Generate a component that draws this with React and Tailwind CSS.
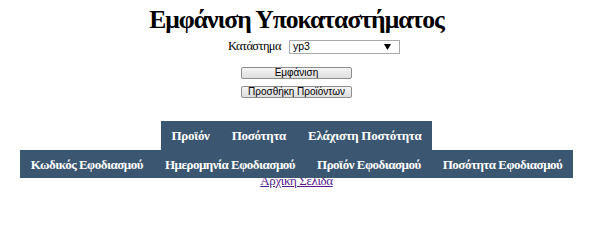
export default function App() {
  const serif = { fontFamily: '"Liberation Serif", "Times New Roman", serif' }
  const top = ['Προϊόν', 'Ποσότητα', 'Ελάχιστη Ποστότητα']
  const bottom = ['Κωδικός Εφοδιασμού', 'Ημερομηνία Εφοδιασμού', 'Προϊόν Εφοδιασμού', 'Ποσότητα Εφοδιασμού']

  return (
    <div className="w-[593px] bg-white text-black font-['Liberation_Serif',serif]">
      <h1 className="mt-[5px] text-center text-[25.6px] font-bold leading-[30px] tracking-[-1px]">Εμφάνιση Υποκαταστήματος</h1>

      <div className="mt-[4px] flex items-center justify-center gap-[8px] pl-[35px]">
        <label className="text-[12.5px] leading-[15px] tracking-[-0.6px]">Κατάστημα</label>
        <div className="flex h-[14px] w-[111px] items-center justify-between border border-[#a9a9a9] bg-white pl-[3px] pr-[8px] font-['Liberation_Sans',Arial,sans-serif] text-[10.5px] leading-none">
          <span>yp3</span>
          <svg width="7" height="6" viewBox="0 0 7 6"><path d="M0 0h7L3.5 6z" fill="#000" /></svg>
        </div>
      </div>

      <div className="mt-[13px] flex flex-col items-center gap-[7px] font-['Liberation_Sans',Arial,sans-serif]">
        <button className="h-[12px] w-[111px] rounded-[2px] border border-[#8e8e8e] bg-gradient-to-b from-[#f4f4f4] to-[#dedede] text-[10px] leading-none text-black">
          Εμφάνιση
        </button>
        <button className="h-[12px] w-[111px] rounded-[2px] border border-[#8e8e8e] bg-gradient-to-b from-[#f4f4f4] to-[#dedede] text-[10px] leading-none text-black">
          Προσθήκη Προϊόντων
        </button>
      </div>

      <div className="mt-[23px] flex flex-col items-center">
        <div className="relative flex bg-[#3b5670] text-white">
          {top.map(t => (
            <div key={t} className="whitespace-nowrap px-[11px] py-[7px] text-[13px] font-bold leading-[15px] tracking-[-0.3px]" style={serif}>{t}</div>
          ))}
        </div>
        <div className="relative flex bg-[#3b5670] text-white">
          {bottom.map(t => (
            <div key={t} className="whitespace-nowrap px-[11px] py-[6.5px] text-[13px] font-bold leading-[15px] tracking-[-0.5px]" style={serif}>{t}</div>
          ))}
        </div>
        <a href="#" className="-mt-[5px] text-[13px] leading-[15px] tracking-[-0.4px] text-[#551a8b] underline">Αρχική Σελίδα</a>
      </div>
    </div>
  )
}
